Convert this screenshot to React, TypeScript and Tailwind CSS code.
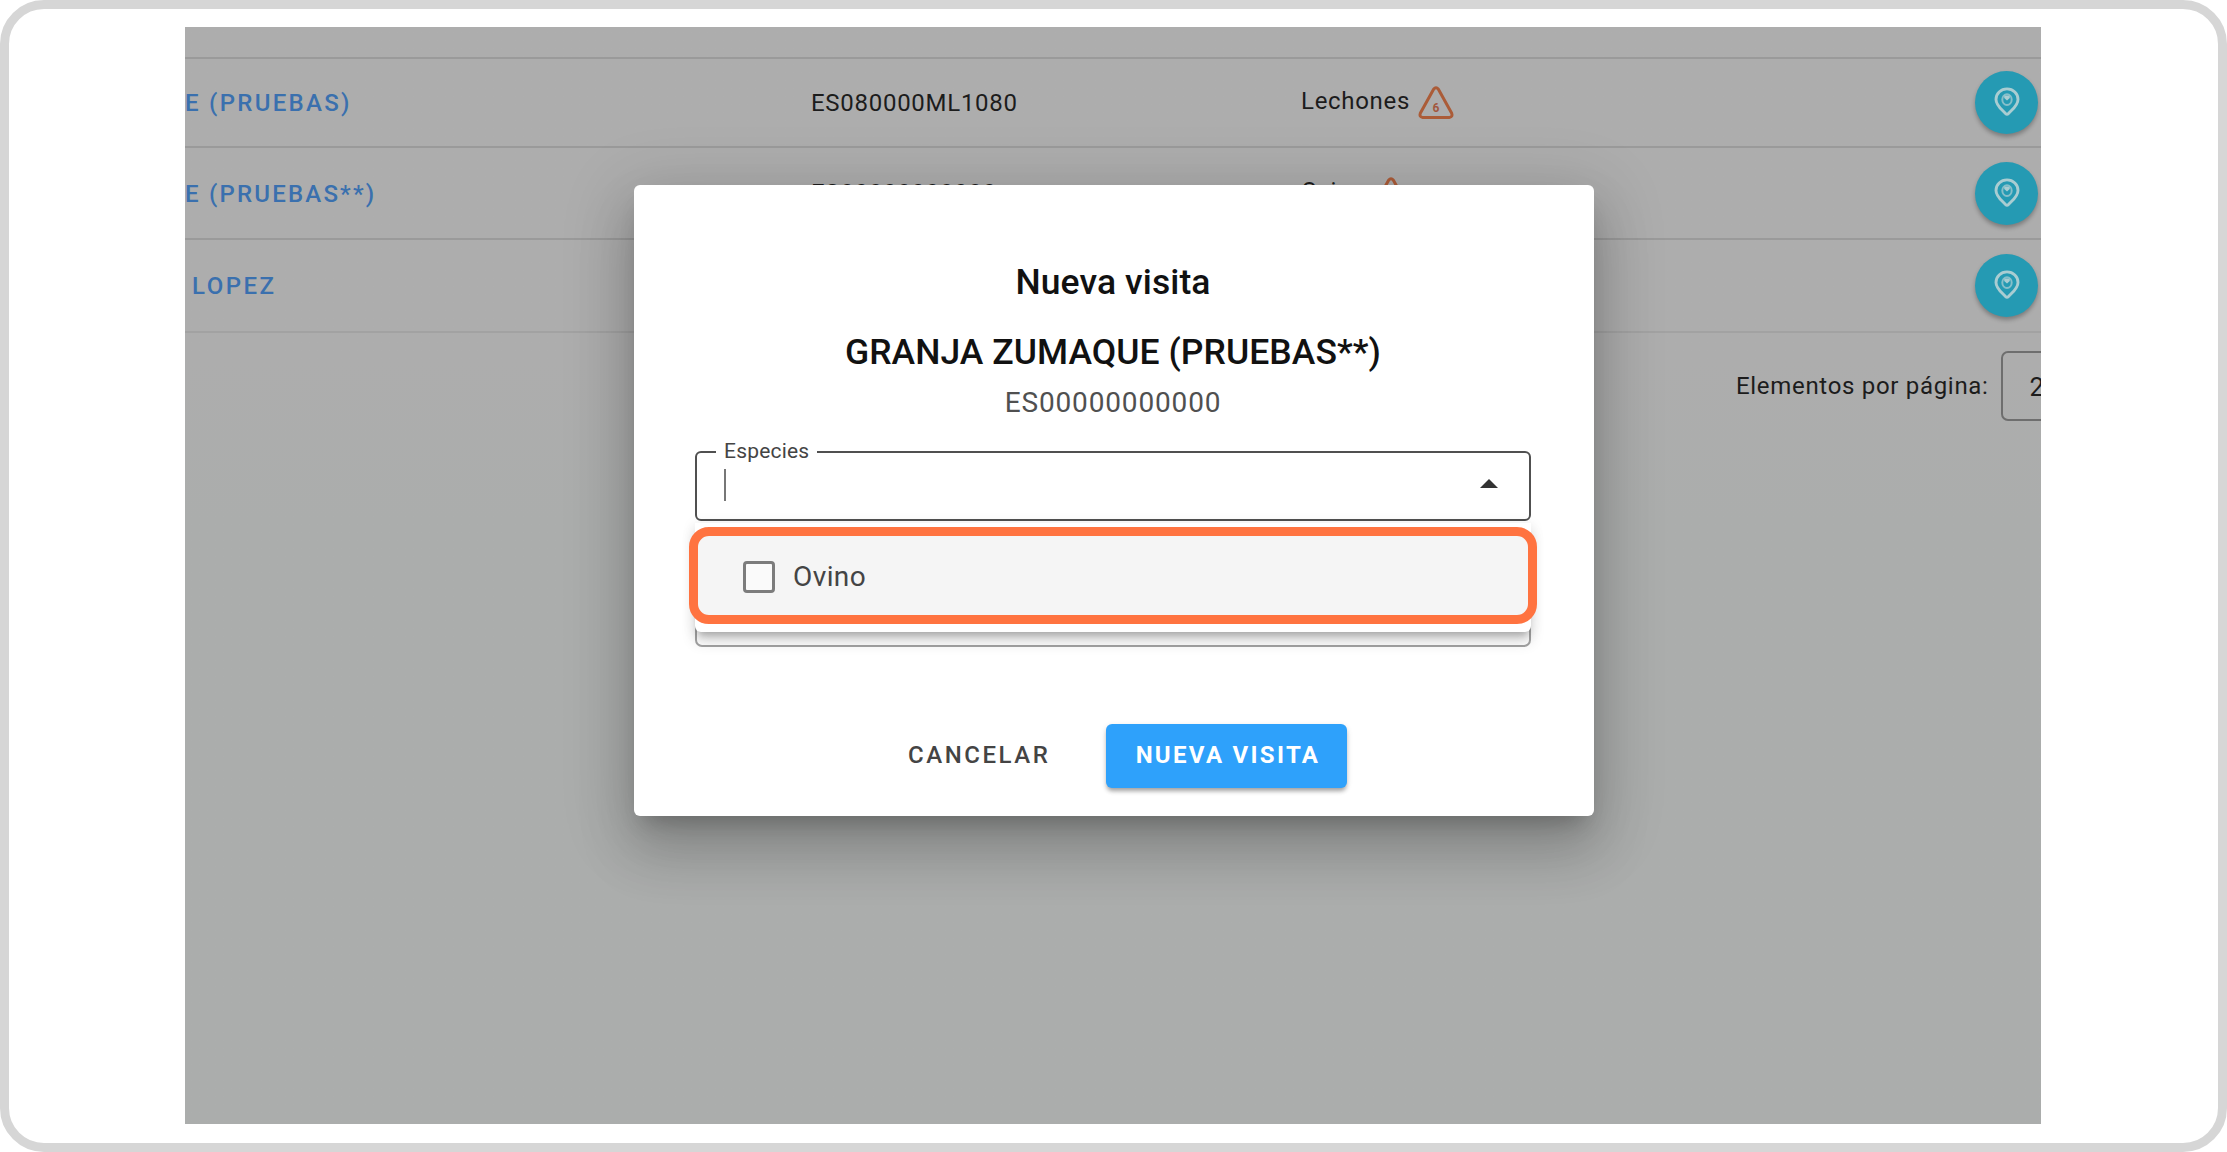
import clsx from 'clsx';

interface Farm {
  name: string;
  nameClass: string;
  code: string;
  species: string;
  alert?: string;
  rowClass: string;
}

const FARMS: Farm[] = [
  {
    name: 'E (PRUEBAS)',
    nameClass: 'tracking-[2.3px]',
    code: 'ES080000ML1080',
    species: 'Lechones',
    alert: '6',
    rowClass: 'h-[89px]',
  },
  {
    name: 'E (PRUEBAS**)',
    nameClass: 'pt-[2px] tracking-[2.2px]',
    code: 'ES00000000000',
    species: 'Ovino',
    alert: '6',
    rowClass: 'h-[92px]',
  },
  {
    name: 'LOPEZ',
    nameClass: 'pl-[7px] tracking-[2.5px]',
    code: '',
    species: '',
    rowClass: 'h-[93px]',
  },
];

function AlertTriangle({ count }: { count: string }) {
  return (
    <svg viewBox="0 0 36 34" className="mt-px h-[34px] w-9 shrink-0">
      <path
        d="M15.6 3.2 2.3 27.2Q1 31 4.6 31.4H31.4Q35 31 33.7 27.2L20.4 3.2Q18 .4 15.6 3.2Z"
        fill="none"
        stroke="#ab5c38"
        strokeWidth="3"
        strokeLinejoin="round"
      />
      <text x="18" y="25.5" textAnchor="middle" fontSize="12" fontWeight="700" fill="#a2583f">
        {count}
      </text>
    </svg>
  );
}

function VisitPin() {
  return (
    <svg viewBox="0 0 26 29" className="mt-[-2px] h-[29px] w-[26px]" fill="none">
      <path
        d="M13 1.9C6.8 1.9 2 6.6 2 12.4c0 5.9 5.2 9.6 9.6 14.2Q13 27.9 14.4 26.6C18.8 22 24 18.3 24 12.4 24 6.6 19.2 1.9 13 1.9Z"
        stroke="#a9cdd2"
        strokeWidth="2.9"
      />
      <ellipse cx="13" cy="12.6" rx="4.7" ry="5.4" stroke="#86bfca" strokeWidth="2" />
      <path d="M10.2 11 13 13.4 15.8 11V8.5H10.2Z" fill="#a9cdd2" />
    </svg>
  );
}

function FarmRow({ farm }: { farm: Farm }) {
  return (
    <div className={clsx('flex shrink-0 items-center border-t-2 border-[#9a9a9a]', farm.rowClass)}>
      <div className={clsx('w-[626px] shrink-0 font-medium text-[#3a70ae]', farm.nameClass)}>
        {farm.name}
      </div>
      <div className="w-[490px] shrink-0 tracking-[0.72px]">{farm.code}</div>
      <div className="flex w-[674px] shrink-0 items-center gap-2">
        <span className="mt-[-4px] tracking-[0.7px]">{farm.species}</span>
        {farm.alert && <AlertTriangle count={farm.alert} />}
      </div>
      <button className="flex size-[63px] shrink-0 items-center justify-center rounded-full bg-[#259ab3] shadow-[0_3px_4px_rgba(0,0,0,0.28)]">
        <VisitPin />
      </button>
    </div>
  );
}

function FarmList() {
  return (
    <div className="flex h-full flex-col text-2xl leading-7 whitespace-nowrap text-[#1c1c1c]">
      <div className="h-[30px] shrink-0" />
      {FARMS.map((farm) => (
        <FarmRow key={farm.name} farm={farm} />
      ))}
      <div className="flex items-start border-t-2 border-[#a2a2a2] pt-[18px] pl-[1551px]">
        <span className="mt-[21px] tracking-[0.69px]">Elementos por página:</span>
        <div className="ml-3 flex h-[70px] w-[120px] shrink-0 items-center rounded-[7px] border-2 border-[#6e6e6e] pt-px pl-[27px] text-[26px]">
          2
        </div>
      </div>
    </div>
  );
}

function SpeciesMenu() {
  return (
    <div className="absolute inset-x-0 top-[72px] h-[109px] rounded-b-[6px] bg-white pt-[4px] shadow-[0_7px_7px_-4px_rgba(0,0,0,0.22),0_10px_14px_1px_rgba(0,0,0,0.12),0_2px_14px_1px_rgba(0,0,0,0.08)]">
      <div className="mx-[-6px] flex h-[97px] items-center rounded-[20px] border-[9px] border-[#ff7340] bg-[#f5f5f5] pt-[2px] pl-[45px]">
        <span className="size-8 rounded-[4px] border-[3px] border-[#7c7c7c] bg-[#fafafa]" />
        <span className="ml-[18px] text-[28px] tracking-[0.4px] text-[#444]">Ovino</span>
      </div>
    </div>
  );
}

function VisitDialog() {
  return (
    <div className="absolute top-[158px] left-[449px] flex h-[631px] w-[960px] flex-col rounded-[6px] bg-white pt-[76px] pr-[63px] pl-[61px] shadow-[0_15px_21px_-10px_rgba(0,0,0,0.22),0_34px_54px_4px_rgba(0,0,0,0.15),0_13px_66px_11px_rgba(0,0,0,0.13)]">
      <h1 className="text-center text-[35.5px] leading-[42px] font-medium tracking-[0.1px] text-[#111]">
        Nueva visita
      </h1>
      <h2 className="mt-7 text-center text-[35.5px] leading-[42px] font-medium tracking-[0.05px] text-[#111]">
        GRANJA ZUMAQUE (PRUEBAS**)
      </h2>
      <p className="mt-[13px] text-center text-[28px] leading-[34px] tracking-[0.85px] text-[#505050]">
        ES00000000000
      </p>

      <div className="relative z-10 mt-[31px] h-[70px] shrink-0">
        <fieldset className="mt-[-12px] h-[82px] rounded-[6px] border-2 border-[#505050] pl-[19px]">
          <legend className="px-[8px] text-[21px] leading-[25px] tracking-[0.2px] text-[#444]">
            Especies
          </legend>
          <div className="flex items-start justify-between pr-[31px]">
            <span className="mt-[5px] ml-[8px] h-8 w-[2px] bg-[#777]" />
            <svg viewBox="0 0 18 9" className="mt-[15px] h-[9px] w-[18px]">
              <path d="M9 0 18 9H0Z" fill="#333" />
            </svg>
          </div>
        </fieldset>
        <SpeciesMenu />
      </div>
      <div className="mt-[56px] h-[70px] shrink-0 rounded-[7px] border-2 border-[#a3a3a3]" />

      <div className="mt-[77px] flex items-center text-2xl">
        <button className="ml-[213px] pb-[2px] font-medium tracking-[2.55px] text-[#444]">
          CANCELAR
        </button>
        <button className="ml-[56px] h-16 w-[241px] rounded-[6px] bg-[#2ea1fb] pb-[2px] pl-[2px] font-bold tracking-[2.3px] text-white shadow-[0_4px_4px_-1px_rgba(0,0,0,0.3),0_2px_6px_rgba(0,0,0,0.12)]">
          NUEVA VISITA
        </button>
      </div>
    </div>
  );
}

export default function App() {
  return (
    <div className="flex h-[1152px] w-[2227px] rounded-[44px] border-[9px] border-[#d6d6d6] bg-white pt-[18px] pl-[176px] font-['Roboto','Liberation_Sans',sans-serif]">
      <main className="relative h-[1097px] w-[1856px] overflow-hidden bg-linear-to-b from-[#adadad] from-30% to-[#abadac] to-45%">
        <FarmList />
        <VisitDialog />
      </main>
    </div>
  );
}
